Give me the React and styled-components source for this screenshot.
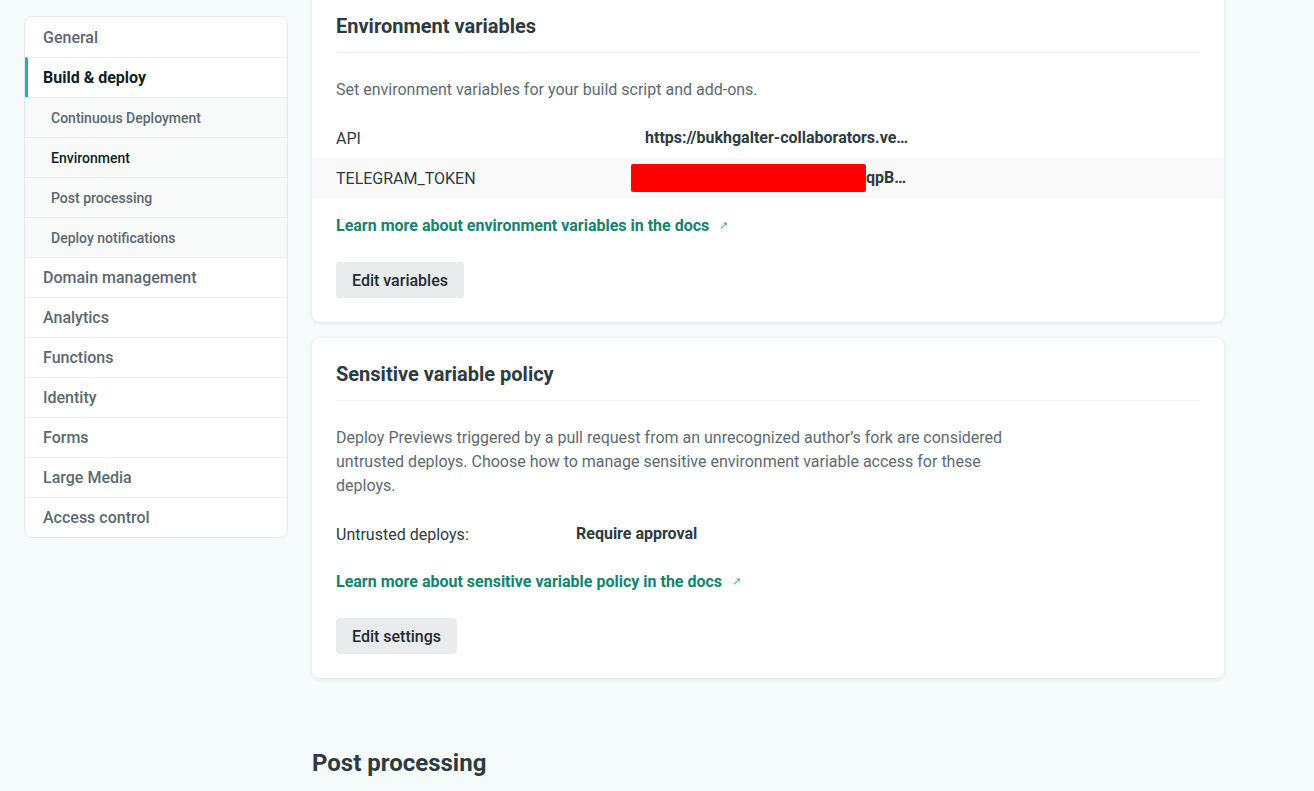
import React from "react";
import styled, { createGlobalStyle } from "styled-components";

const GlobalStyle = createGlobalStyle`
  html, body {
    margin: 0;
    padding: 0;
    overflow: hidden;
    background: #f5fafa;
    font-family: Roboto, "Liberation Sans", sans-serif;
    color: #2d3b41;
  }
  * {
    box-sizing: border-box;
  }
`;

const Page = styled.div`
  display: flex;
  align-items: flex-start;
  gap: 24px;
  padding: 16px 24px 0;
  height: 791px;
  overflow: hidden;
`;

const Sidebar = styled.nav`
  width: 264px;
  flex-shrink: 0;
  background: #fff;
  border: 1px solid #e6e9eb;
  border-radius: 8px;
  overflow: hidden;
`;

const NavItem = styled.div`
  height: 40px;
  display: flex;
  align-items: center;
  padding-left: ${(p) => (p.sub ? "26px" : p.selected ? "15px" : "18px")};
  border-top: ${(p) => (p.first ? "none" : "1px solid #eceeef")};
  border-left: ${(p) => (p.selected ? "3px solid #21b3a1" : "none")};
  background: ${(p) => (p.sub ? "#f8f9f9" : "#fff")};
  font-size: ${(p) => (p.sub ? "14px" : "16px")};
  font-weight: ${(p) => (p.selected ? 700 : 500)};
  color: ${(p) => (p.active || p.selected ? "#0e1e25" : "#5c6870")};
`;

const Main = styled.main`
  width: 912px;
  display: flex;
  flex-direction: column;
  gap: 16px;
  margin-top: -26px;
`;

const Card = styled.section`
  background: #fff;
  border-radius: 8px;
  box-shadow: 0 1px 4px rgba(14, 30, 37, 0.1);
  padding: 24px 0;
`;

const CardHeader = styled.div`
  margin: 0 24px;
  padding-bottom: 14px;
  border-bottom: 1px solid #eef0f1;
`;

const CardTitle = styled.h2`
  margin: 0;
  font-size: 20px;
  line-height: 24px;
  font-weight: 700;
  color: #2d3b41;
`;

const Text = styled.p`
  margin: 25px 24px 0;
  max-width: ${(p) => (p.narrow ? "680px" : "none")};
  font-size: 16px;
  line-height: 24px;
  color: #5e6a71;
`;

const Rows = styled.div`
  margin-top: 16px;
`;

const Row = styled.div`
  display: flex;
  align-items: center;
  height: 40px;
  padding: 0 24px;
  background: ${(p) => (p.shaded ? "#f9f9f9" : "transparent")};
  font-size: 16px;
`;

const Label = styled.div`
  width: ${(p) => p.w || 309}px;
  flex-shrink: 0;
  color: #2d3b41;
`;

const Value = styled.div`
  max-width: 264px;
  font-size: 16px;
  font-weight: 700;
  line-height: 28px;
  color: #2d3b41;
  white-space: nowrap;
  overflow: ${(p) => (p.redacted ? "visible" : "hidden")};
  text-overflow: ellipsis;
`;

const Redacted = styled.span`
  display: inline-block;
  width: 235px;
  height: 28px;
  margin-left: -14px;
  vertical-align: top;
  background: #ff0000;
  border-radius: 2px;
`;

const DocLink = styled.a`
  display: inline-flex;
  align-items: center;
  gap: 10px;
  margin: 16px 24px 0;
  font-size: 16px;
  line-height: 24px;
  font-weight: 700;
  color: #13836f;
  text-decoration: none;
`;

const LinkArrow = styled.span`
  font-size: 11px;
  font-weight: 400;
  color: #4aa79b;
`;

const Button = styled.button`
  display: block;
  margin: 24px 24px 0;
  height: 36px;
  padding: 0 16px;
  border: none;
  border-radius: 4px;
  background: #e9ebed;
  font-family: inherit;
  font-size: 16px;
  font-weight: 500;
  color: #1f2b31;
`;

const SectionTitle = styled.h2`
  margin: 54px 0 0;
  font-size: 24px;
  line-height: 30px;
  font-weight: 700;
  color: #2d3b41;
`;

const SectionText = styled.p`
  margin: 6px 0 0;
  font-size: 16px;
  line-height: 24px;
  color: #5e6a71;
`;

const navItems = [
  { label: "General" },
  { label: "Build & deploy", selected: true },
  { label: "Continuous Deployment", sub: true },
  { label: "Environment", sub: true, active: true },
  { label: "Post processing", sub: true },
  { label: "Deploy notifications", sub: true },
  { label: "Domain management" },
  { label: "Analytics" },
  { label: "Functions" },
  { label: "Identity" },
  { label: "Forms" },
  { label: "Large Media" },
  { label: "Access control" },
];

const App = () => {
  return (
    <>
      <GlobalStyle />
      <Page>
        <Sidebar>
          {navItems.map((item, i) => (
            <NavItem
              key={item.label}
              first={i === 0}
              sub={item.sub}
              selected={item.selected}
              active={item.active}
            >
              {item.label}
            </NavItem>
          ))}
        </Sidebar>
        <Main>
          <Card>
            <CardHeader>
              <CardTitle>Environment variables</CardTitle>
            </CardHeader>
            <Text>Set environment variables for your build script and add-ons.</Text>
            <Rows>
              <Row>
                <Label>API</Label>
                <Value>https://bukhgalter-collaborators.vercel.app/api</Value>
              </Row>
              <Row shaded>
                <Label>TELEGRAM_TOKEN</Label>
                <Value redacted>
                  <Redacted />
                  qpB…
                </Value>
              </Row>
            </Rows>
            <DocLink href="#">
              Learn more about environment variables in the docs
              <LinkArrow>↗</LinkArrow>
            </DocLink>
            <Button>Edit variables</Button>
          </Card>
          <Card>
            <CardHeader>
              <CardTitle>Sensitive variable policy</CardTitle>
            </CardHeader>
            <Text narrow>
              Deploy Previews triggered by a pull request from an unrecognized author’s fork are
              considered untrusted deploys. Choose how to manage sensitive environment variable
              access for these deploys.
            </Text>
            <Rows>
              <Row>
                <Label w={240}>Untrusted deploys:</Label>
                <Value>Require approval</Value>
              </Row>
            </Rows>
            <DocLink href="#">
              Learn more about sensitive variable policy in the docs
              <LinkArrow>↗</LinkArrow>
            </DocLink>
            <Button>Edit settings</Button>
          </Card>
          <SectionTitle>Post processing</SectionTitle>
          <SectionText>
            Control the post processing and optimizations Netlify can do for you.
          </SectionText>
        </Main>
      </Page>
    </>
  );
};

export default App;
